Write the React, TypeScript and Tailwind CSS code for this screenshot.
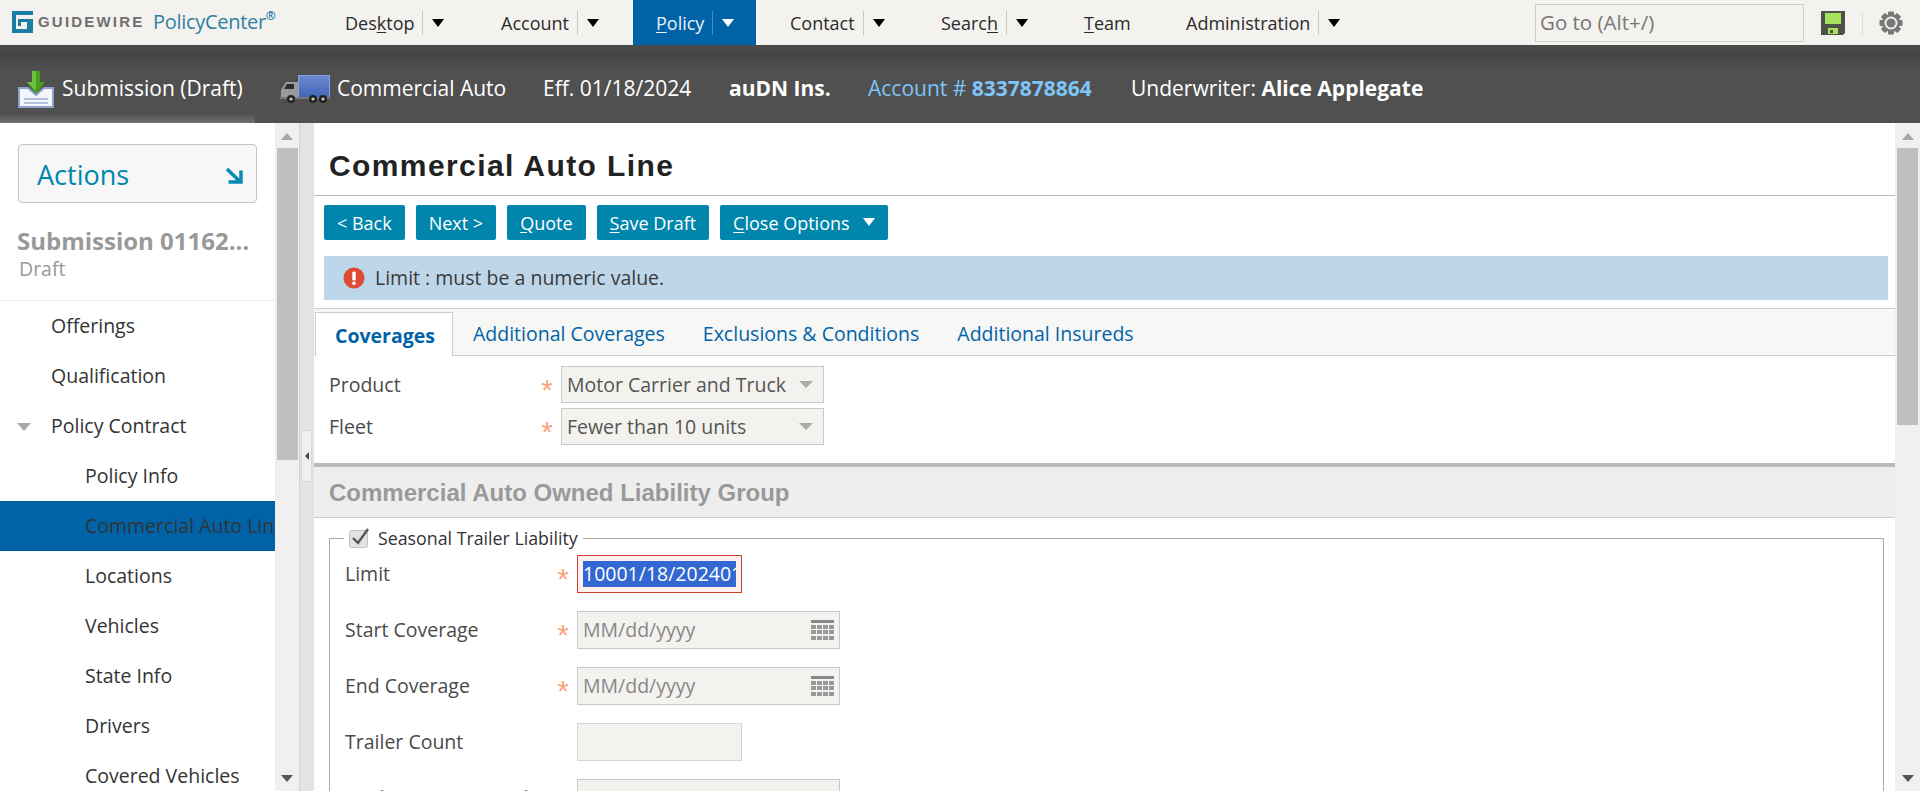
import React from "react";

const Caret = ({ className = "" }: { className?: string }) => (
  <span className={`w-0 h-0 border-x-[6px] border-x-transparent border-t-[8px] ${className}`} />
);

const Key = ({ children }: { children: React.ReactNode }) => <span className="underline underline-offset-2">{children}</span>;

const navItems: { label: React.ReactNode; menu: boolean; active?: boolean; width: string }[] = [
  { label: <>Des<Key>k</Key>top</>, menu: true, width: "w-[145px]" },
  { label: "Account", menu: true, width: "w-[144px]" },
  { label: <><Key>P</Key>olicy</>, menu: true, active: true, width: "w-[123px]" },
  { label: "Contact", menu: true, width: "w-[140px]" },
  { label: <>Searc<Key>h</Key></>, menu: true, width: "w-[132px]" },
  { label: <><Key>T</Key>eam</>, menu: false, width: "w-[91px]" },
  { label: "Administration", menu: true, width: "w-[199px]" },
];

const NavItem = ({ label, menu, active, width }: (typeof navItems)[number]) => (
  <div className={`flex items-center h-full pl-[23px] ${width} ${active ? "bg-[#0063a8] text-[#e8f1f8]" : "text-[#2b2b2b]"}`}>
    <span className="pt-[2px]">{label}</span>
    {menu && (
      <>
        <span className={`ml-[8px] w-px h-[24px] ${active ? "bg-[#4a8cbd]" : "bg-[#c8c8c4]"}`} />
        <Caret className={`ml-[9px] ${active ? "border-t-white" : "border-t-black"}`} />
      </>
    )}
  </div>
);

const Logo = () => (
  <div className="flex items-center w-[322px] pl-[12px] mt-[-1px]">
    <svg width="21" height="22" viewBox="0 0 21 22" className="shrink-0">
      <path d="M0 0H21V4H4V18H15V11H9V15H6V8H21V22H0Z" fill="#1a7ea6" />
    </svg>
    <span className="ml-[5px] w-[115px] font-['Liberation_Sans',sans-serif] font-bold text-[15px] tracking-[2.2px] text-[#6f6f6f]">GUIDEWIRE</span>
    <span className="text-[20px] tracking-[-0.3px] text-[#2f7fa5]">PolicyCenter</span>
    <span className="text-[12px] font-bold text-[#2f7fa5] self-start mt-[8px]">®</span>
  </div>
);

const SaveIcon = () => (
  <svg width="24" height="24" viewBox="0 0 24 24">
    <path d="M0 0H24V22L22 24H0Z" fill="#4c5249" />
    <rect x="4" y="2" width="16" height="11" fill="#a6e25c" />
    <rect x="7" y="17" width="10" height="6" fill="#a6e25c" />
    <rect x="9" y="19" width="3" height="3" fill="#4c5249" />
  </svg>
);

const GearIcon = () => (
  <svg width="24" height="24" viewBox="0 0 24 24">
    <g fill="#777">
      {[0, 45, 90, 135].map((a) => (
        <rect key={a} x="9" y="0.5" width="6" height="23" rx="1" transform={`rotate(${a} 12 12)`} />
      ))}
    </g>
    <circle cx="12" cy="12" r="9" fill="#777" />
    <circle cx="12" cy="12" r="6.5" fill="#f3f2ee" />
    <circle cx="12" cy="12" r="4.5" fill="#777" />
  </svg>
);

const TopBar = () => (
  <div className="flex items-stretch h-[45px] shrink-0 bg-[#f3f2ee] text-[18px]">
    <Logo />
    <div className="flex h-full gap-[11px]">
      {navItems.map((item, i) => (
        <NavItem key={i} {...item} />
      ))}
    </div>
    <div className="ml-[173px] flex items-center">
      <div className="flex items-center w-[269px] h-[38px] border border-[#cfcec8] pl-[4px] text-[20.5px] text-[#777]">Go to (Alt+/)</div>
      <div className="ml-[17px]"><SaveIcon /></div>
      <span className="ml-[17px] w-px h-[24px] bg-[#e0dfda]" />
      <div className="ml-[16px]"><GearIcon /></div>
    </div>
  </div>
);

const SubmissionIcon = () => (
  <svg width="36" height="37" viewBox="0 0 36 37">
    <path d="M1 17H10L18 24L26 17H35V36H1Z" fill="#f4f6fb" stroke="#8fa2cb" strokeWidth="2" />
    <path d="M6 28H30M6 32H30" stroke="#9db0d6" strokeWidth="1.5" />
    <path d="M14 0H22V11H27L18 23L9 11H14Z" fill="#43a01e" />
    <path d="M14 0H18V20L9 11H14Z" fill="#6cc23a" />
  </svg>
);

const TruckIcon = () => (
  <svg width="50" height="28" viewBox="0 0 50 28">
    <defs>
      <linearGradient id="box" x1="0" y1="0" x2="0" y2="1">
        <stop offset="0" stopColor="#6d8ad2" />
        <stop offset="1" stopColor="#3f63b5" />
      </linearGradient>
    </defs>
    <rect x="18.5" y="0.5" width="31" height="23" fill="url(#box)" stroke="#88a0dc" />
    <path d="M1 23V15L6 7H18V23Z" fill="#9a9a9a" />
    <path d="M7 9H14V14H4Z" fill="#2c2c2c" />
    <rect x="0" y="22" width="50" height="2" fill="#777" />
    {[11, 33, 43].map((x) => (
      <g key={x}>
        <circle cx={x} cy="24" r="4" fill="#222" />
        <circle cx={x} cy="24" r="1.6" fill="#ccc" />
      </g>
    ))}
  </svg>
);

const InfoBar = () => (
  <div className="relative flex items-center h-[78px] shrink-0 pt-[10px] pl-[18px] bg-gradient-to-b from-[#3b3b3b] via-[#505050] via-[30%] to-[#505050] text-[21px] text-white">
    <div className="absolute top-0 inset-x-0 h-[8px] bg-[#4a4a4a]" />
    <div className="absolute bottom-0 left-0 w-[255px] h-[9px] bg-gradient-to-t from-white/20 to-transparent" />
    <div className="flex"><SubmissionIcon /></div>
    <span className="ml-[8px] w-[180px] whitespace-nowrap">Submission (Draft)</span>
    <div className="ml-[38px] flex"><TruckIcon /></div>
    <span className="ml-[7px] w-[168px] whitespace-nowrap">Commercial Auto</span>
    <span className="ml-[38px] w-[148px] whitespace-nowrap">Eff. 01/18/2024</span>
    <span className="ml-[38px] w-[101px] font-bold whitespace-nowrap">auDN Ins.</span>
    <span className="ml-[38px] w-[225px] text-[#7fc5f7] whitespace-nowrap">Account # <span className="font-bold">8337878864</span></span>
    <span className="ml-[38px] whitespace-nowrap">Underwriter: <span className="font-bold">Alice Applegate</span></span>
  </div>
);

const ScrollBar = ({ thumb, width }: { thumb: string; width: string }) => (
  <div className={`flex flex-col items-center bg-[#f0f0f0] ${width} shrink-0 relative`}>
    <span className="mt-[10px] w-0 h-0 border-x-[6px] border-x-transparent border-b-[7px] border-b-[#a8a8a8]" />
    <div className={`mt-[8px] w-[21px] bg-[#bfbfbf] ${thumb}`} />
    <span className="absolute bottom-[9px] w-0 h-0 border-x-[6px] border-x-transparent border-t-[7px] border-t-[#555]" />
  </div>
);

const sideItems: { label: string; indent: string; active?: boolean; caret?: boolean }[] = [
  { label: "Offerings", indent: "pl-[51px]" },
  { label: "Qualification", indent: "pl-[51px]" },
  { label: "Policy Contract", indent: "pl-[51px]", caret: true },
  { label: "Policy Info", indent: "pl-[85px]" },
  { label: "Commercial Auto Line", indent: "pl-[85px]", active: true },
  { label: "Locations", indent: "pl-[85px]" },
  { label: "Vehicles", indent: "pl-[85px]" },
  { label: "State Info", indent: "pl-[85px]" },
  { label: "Drivers", indent: "pl-[85px]" },
  { label: "Covered Vehicles", indent: "pl-[85px]" },
];

const Sidebar = () => (
  <div className="flex shrink-0 h-full">
    <div className="w-[275px] overflow-hidden">
      <div className="mt-[21px] ml-[18px] w-[239px] h-[59px] flex items-center justify-between pl-[18px] pr-[13px] pt-[3px] rounded-[4px] border border-[#c4c4c4] bg-[#f7f7f7] text-[27px] text-[#0086ac]">
        <span>Actions</span>
        <svg width="18" height="17" viewBox="0 0 18 17">
          <path d="M2 2L15 14.5M16 3.5V15H3.5" fill="none" stroke="#0a8ab0" strokeWidth="3.5" />
        </svg>
      </div>
      <div className="mt-[23px] ml-[17px] text-[24px] leading-[30px] font-bold text-[#999] whitespace-nowrap">Submission 01162...</div>
      <div className="ml-[19px] text-[19.5px] leading-[26px] text-[#999]">Draft</div>
      <div className="mt-[18px] border-t border-[#ececec]" />
      {sideItems.map((item) => (
        <div
          key={item.label}
          className={`relative flex items-center h-[50px] whitespace-nowrap overflow-hidden text-[19.5px] text-[#333] ${item.indent} ${item.active ? "bg-[#0063a8]" : ""}`}
        >
          {item.caret && <span className="absolute left-[17px] top-[22px] w-0 h-0 border-x-[7px] border-x-transparent border-t-[8px] border-t-[#aaa]" />}
          {item.label}
        </div>
      ))}
    </div>
    <ScrollBar width="w-[24px]" thumb="h-[312px]" />
    <div className="relative w-[15px] border-l border-[#d2d2d2] bg-[#e3e3e3]">
      <div className="absolute top-[307px] left-[1px] w-[11px] h-[52px] flex items-center justify-center bg-[#f0f0f0] border border-[#d8d8d8] rounded-[2px]">
        <span className="w-0 h-0 border-y-[4px] border-y-transparent border-r-[4px] border-r-[#444]" />
      </div>
    </div>
  </div>
);

const Btn = ({ children, caret }: { children: React.ReactNode; caret?: boolean }) => (
  <button className="flex items-center h-[35px] px-[13px] pt-[1px] rounded-[2px] bg-[#0086ac] text-white text-[18px]">
    {children}
    {caret && <Caret className="ml-[13px] mt-[-3px] border-t-white" />}
  </button>
);

const Star = () => <span className="w-[20px] text-center text-[#f7a57f] text-[30px] leading-[30px] mt-[10px] font-['Liberation_Sans',sans-serif]">*</span>;

const Select = ({ value }: { value: string }) => (
  <div className="flex items-center justify-between w-[263px] h-[37px] ml-[4px] pl-[5px] pr-[10px] bg-[#f3f2ee] border border-[#c8c8c8] text-[#555]">
    <span>{value}</span>
    <span className="w-0 h-0 border-x-[7px] border-x-transparent border-t-[7px] border-t-[#aaa]" />
  </div>
);

const CalendarIcon = () => (
  <svg width="23" height="21" viewBox="0 0 23 21">
    <rect width="23" height="3" fill="#888" />
    {[5, 10, 16].map((y) =>
      [0, 6, 12, 18].map((x) => <rect key={`${x}-${y}`} x={x} y={y} width="5" height="4" fill="#999" />)
    )}
  </svg>
);

const DateInput = () => (
  <div className="flex items-center justify-between w-[263px] h-[38px] pl-[5px] pr-[5px] bg-[#f3f2ee] border border-[#c8c8c8] text-[#888]">
    <span>MM/dd/yyyy</span>
    <CalendarIcon />
  </div>
);

const FormRow = ({ label, required, children }: { label: string; required?: boolean; children: React.ReactNode }) => (
  <div className="flex items-center h-[38px] whitespace-nowrap">
    <span className="w-[208px] text-[#4a4a4a]">{label}</span>
    <span className="w-[24px] pr-[4px] flex justify-center">{required && <Star />}</span>
    {children}
  </div>
);

const tabs = ["Additional Coverages", "Exclusions & Conditions", "Additional Insureds"];

const Main = () => (
  <div className="flex-1 min-w-0 h-full overflow-hidden text-[19.5px] text-[#333]">
    <div className="flex items-center h-[73px] pl-[15px] pt-[12px] border-b border-[#bbb] font-['Liberation_Sans',sans-serif] font-bold text-[30px] tracking-[1.4px] text-[#222]">
      Commercial Auto Line
    </div>
    <div className="flex gap-[11px] mt-[9px] ml-[10px]">
      <Btn>&lt; Back</Btn>
      <Btn>Next &gt;</Btn>
      <Btn><Key>Q</Key>uote</Btn>
      <Btn><Key>S</Key>ave Draft</Btn>
      <Btn caret><Key>C</Key>lose Options</Btn>
    </div>
    <div className="flex items-center h-[44px] mt-[16px] ml-[10px] mr-[7px] pl-[19px] bg-[#bed6e9] text-[#3a3a3a]">
      <svg width="22" height="22" viewBox="0 0 22 22" className="shrink-0">
        <circle cx="11" cy="11" r="10.5" fill="#dc4c35" />
        <rect x="9.3" y="4.5" width="3.4" height="9" rx="1.2" fill="#fff" />
        <circle cx="11" cy="16.3" r="1.8" fill="#fff" />
      </svg>
      <span className="ml-[10px]">Limit : must be a numeric value.</span>
    </div>
    <div className="flex items-end h-[48px] mt-[8px] pl-[1px] border-y border-[#ccc] bg-[#f7f7f5]">
      <div className="flex items-center h-[44px] mb-[-1px] pl-[19px] pr-[17px] pt-[2px] bg-white border-x border-t border-[#ccc] font-bold text-[#0063a8]">Coverages</div>
      <div className="flex h-[44px] items-center pl-[20px] pt-[2px] gap-[38px] text-[#0063a8]">
        {tabs.map((t) => (
          <span key={t}>{t}</span>
        ))}
      </div>
    </div>
    <div className="flex flex-col gap-[5px] mt-[10px] pl-[15px]">
      <div className="flex items-center h-[37px]">
        <span className="w-[208px] text-[#4a4a4a]">Product</span>
        <Star />
        <Select value="Motor Carrier and Truck" />
      </div>
      <div className="flex items-center h-[37px]">
        <span className="w-[208px] text-[#4a4a4a]">Fleet</span>
        <Star />
        <Select value="Fewer than 10 units" />
      </div>
    </div>
    <div className="mt-[18px] h-[55px] flex items-center pl-[15px] pt-[1px] border-t-[4px] border-t-[#bbb] border-b border-b-[#ccc] bg-[#eee] font-['Liberation_Sans',sans-serif] font-bold text-[24px] text-[#999]">
      Commercial Auto Owned Liability Group
    </div>
    <fieldset className="mt-[10px] ml-[15px] mr-[11px] pl-[15px] border border-[#aaa]">
      <legend className="flex items-center h-[20px] ml-[-1px] px-[5px] text-[17.8px] text-[#333]">
        <svg width="21" height="20" viewBox="0 0 21 20">
          <rect x="0.5" y="2.5" width="18" height="17" rx="2" fill="#e2e2e2" stroke="#c4c4c4" />
          <path d="M4 10L9 15L19 1" fill="none" stroke="#555" strokeWidth="2.4" />
        </svg>
        <span className="ml-[8px]">Seasonal Trailer Liability</span>
      </legend>
      <div className="flex flex-col gap-[18px] pt-[7px] pb-[20px]">
        <FormRow label="Limit" required>
          <div className="flex items-center w-[165px] h-[38px] px-[5px] bg-[#fdf0ee] border border-[#c9402f] overflow-hidden text-white">
            <span className="block w-full overflow-hidden bg-[#3367d1] leading-[26px]">10001/18/202401</span>
          </div>
        </FormRow>
        <FormRow label="Start Coverage" required><DateInput /></FormRow>
        <FormRow label="End Coverage" required><DateInput /></FormRow>
        <FormRow label="Trailer Count">
          <div className="w-[165px] h-[38px] bg-[#f3f2ee] border border-[#d4d4d4]" />
        </FormRow>
        <FormRow label="Trailer Usage Period">
          <div className="w-[263px] h-[38px] bg-[#f3f2ee] border border-[#c8c8c8]" />
        </FormRow>
      </div>
    </fieldset>
  </div>
);

const App = () => (
  <div className="flex flex-col h-screen overflow-hidden bg-white font-['Open_Sans',sans-serif]">
    <TopBar />
    <InfoBar />
    <div className="flex flex-1 min-h-0">
      <Sidebar />
      <Main />
      <ScrollBar width="w-[25px]" thumb="h-[277px]" />
    </div>
  </div>
);

export default App;
